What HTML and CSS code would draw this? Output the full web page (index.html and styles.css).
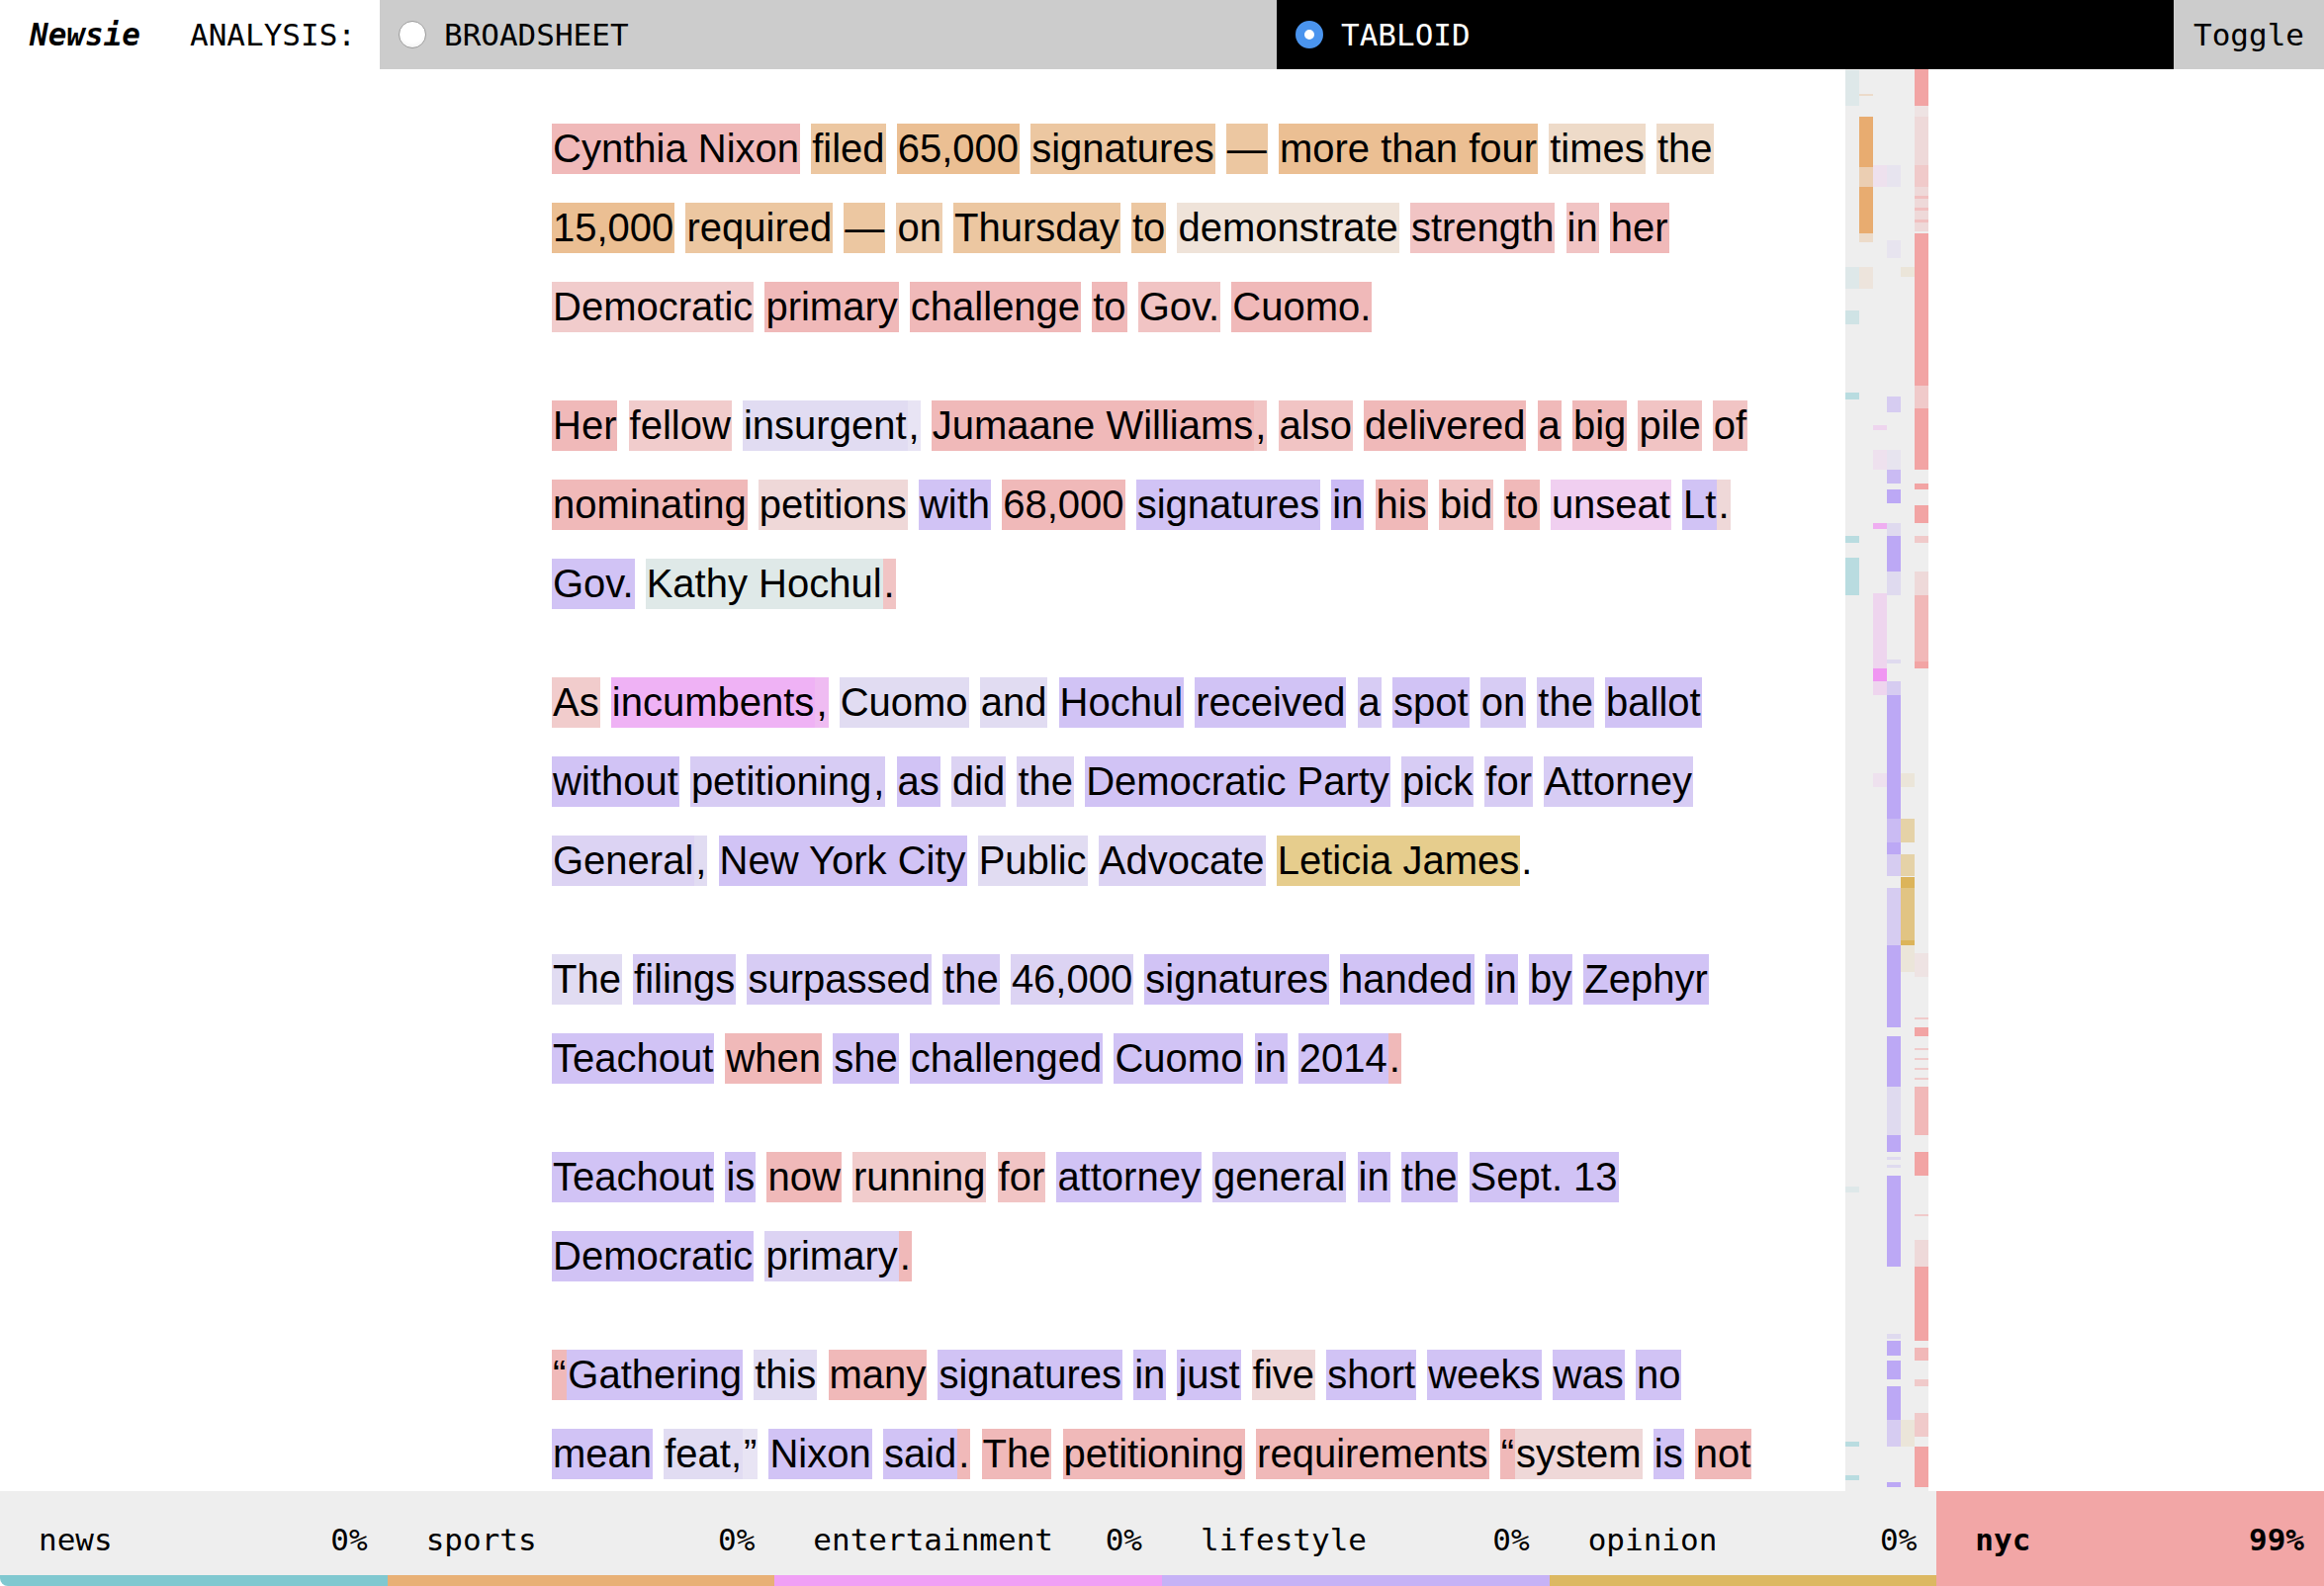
FILE: index.html
```html
<!DOCTYPE html>
<html lang="en">
<head>
<meta charset="utf-8">
<title>Newsie</title>
<link rel="stylesheet" href="styles.css">
</head>
<body>
<header class="topbar">
  <div class="brand">Newsie</div>
  <div class="label">ANALYSIS:</div>
  <div class="mode"><span class="radio"></span><span>BROADSHEET</span></div>
  <div class="mode mode-on"><span class="radio radio-on"></span><span>TABLOID</span></div>
  <button class="toggle">Toggle</button>
</header>

<div class="main">
  <article class="story">
    <p><span class="w r1">Cynthia Nixon</span> <span class="w o2">filed</span> <span class="w o1">65,000</span> <span class="w o2">signatures</span> <span class="w o2">—</span> <span class="w o1">more than four</span> <span class="w o4">times</span> <span class="w o4">the</span><br><span class="w o1">15,000</span> <span class="w o2">required</span> <span class="w o2">—</span> <span class="w o3">on</span> <span class="w o2">Thursday</span> <span class="w o2">to</span> <span class="w o5">demonstrate</span> <span class="w r2">strength</span> <span class="w r2">in</span> <span class="w r1">her</span><br><span class="w r3">Democratic</span> <span class="w r1">primary</span> <span class="w r1">challenge</span> <span class="w r1">to</span> <span class="w r2">Gov.</span> <span class="w r1">Cuomo.</span></p>

    <p><span class="w r1">Her</span> <span class="w r3">fellow</span> <span class="w p4">insurgent</span><span class="w p5">,</span> <span class="w r1">Jumaane Williams</span><span class="w r2">,</span> <span class="w r2">also</span> <span class="w r1">delivered</span> <span class="w r1">a</span> <span class="w r1">big</span> <span class="w r2">pile</span> <span class="w r2">of</span><br><span class="w r1">nominating</span> <span class="w r4">petitions</span> <span class="w p1">with</span> <span class="w r1">68,000</span> <span class="w p1">signatures</span> <span class="w p0">in</span> <span class="w r1">his</span> <span class="w r2">bid</span> <span class="w r1">to</span> <span class="w k2">unseat</span> <span class="w p1">Lt</span><span class="w r4">.</span><br><span class="w p1">Gov.</span> <span class="w t1">Kathy Hochul</span><span class="w r2">.</span></p>

    <p><span class="w r3">As</span> <span class="w k1">incumbents</span><span class="w k3">,</span> <span class="w p4">Cuomo</span> <span class="w p4">and</span> <span class="w p1">Hochul</span> <span class="w p1">received</span> <span class="w p2">a</span> <span class="w p1">spot</span> <span class="w p2">on</span> <span class="w p2">the</span> <span class="w p1">ballot</span><br><span class="w p1">without</span> <span class="w p2">petitioning</span><span class="w p2">,</span> <span class="w p1">as</span> <span class="w p3">did</span> <span class="w p3">the</span> <span class="w p1">Democratic Party</span> <span class="w p2">pick</span> <span class="w p2">for</span> <span class="w p2">Attorney</span><br><span class="w p3">General</span><span class="w p4">,</span> <span class="w p1">New York City</span> <span class="w p4">Public</span> <span class="w p3">Advocate</span> <span class="w g1">Leticia James</span><span class="w">.</span></p>

    <p><span class="w p4">The</span> <span class="w p2">filings</span> <span class="w p2">surpassed</span> <span class="w p2">the</span> <span class="w p3">46,000</span> <span class="w p1">signatures</span> <span class="w p1">handed</span> <span class="w p1">in</span> <span class="w p1">by</span> <span class="w p1">Zephyr</span><br><span class="w p1">Teachout</span> <span class="w r1">when</span> <span class="w p1">she</span> <span class="w p1">challenged</span> <span class="w p1">Cuomo</span> <span class="w p1">in</span> <span class="w p1">2014</span><span class="w r1">.</span></p>

    <p><span class="w p1">Teachout</span> <span class="w p1">is</span> <span class="w r1">now</span> <span class="w r3">running</span> <span class="w r2">for</span> <span class="w p1">attorney</span> <span class="w p2">general</span> <span class="w p1">in</span> <span class="w p1">the</span> <span class="w p1">Sept. 13</span><br><span class="w p1">Democratic</span> <span class="w p3">primary</span><span class="w r1">.</span></p>

    <p><span class="w r1">“</span><span class="w p1">Gathering</span> <span class="w p4">this</span> <span class="w r1">many</span> <span class="w p1">signatures</span> <span class="w p1">in</span> <span class="w p1">just</span> <span class="w r4">five</span> <span class="w p1">short</span> <span class="w p1">weeks</span> <span class="w p1">was</span> <span class="w p1">no</span><br><span class="w p1">mean</span> <span class="w p4">feat,</span><span class="w p5">”</span> <span class="w p1">Nixon</span> <span class="w p1">said</span><span class="w r1">.</span> <span class="w r1">The</span> <span class="w r1">petitioning</span> <span class="w r1">requirements</span> <span class="w r1">“</span><span class="w r4">system</span> <span class="w p1">is</span> <span class="w r1">not</span></p>
  </article>

  <aside class="minimap">
    <div class="mm-col mm-news">
      <i class="s5" style="top:1px;height:36px"></i>
      <i class="s5" style="top:200px;height:22px"></i>
      <i class="s4" style="top:244px;height:14px"></i>
      <i class="s3" style="top:327px;height:7px"></i>
      <i class="s3" style="top:472px;height:7px"></i>
      <i class="s3" style="top:494px;height:38px"></i>
      <i class="s5" style="top:1130px;height:6px"></i>
      <i class="s3" style="top:1388px;height:5px"></i>
      <i class="s3" style="top:1422px;height:5px"></i>
    </div>
    <div class="mm-col mm-sports">
      <i class="s4" style="top:25px;height:2px"></i>
      <i class="s1" style="top:48px;height:51px"></i>
      <i class="s3" style="top:99px;height:20px"></i>
      <i class="s1" style="top:119px;height:47px"></i>
      <i class="s4" style="top:166px;height:9px"></i>
      <i class="s5" style="top:200px;height:22px"></i>
    </div>
    <div class="mm-col mm-ent">
      <i class="s5" style="top:97px;height:22px"></i>
      <i class="s4" style="top:360px;height:5px"></i>
      <i class="s5" style="top:385px;height:20px"></i>
      <i class="s2" style="top:459px;height:6px"></i>
      <i class="s4" style="top:530px;height:76px"></i>
      <i class="s1" style="top:606px;height:13px"></i>
      <i class="s4" style="top:619px;height:14px"></i>
      <i class="s5" style="top:712px;height:14px"></i>
    </div>
    <div class="mm-col mm-life">
      <i class="s5" style="top:97px;height:22px"></i>
      <i class="s5" style="top:173px;height:18px"></i>
      <i class="s3" style="top:331px;height:16px"></i>
      <i class="s5" style="top:385px;height:20px"></i>
      <i class="s2" style="top:405px;height:14px"></i>
      <i class="s1" style="top:425px;height:14px"></i>
      <i class="s4" style="top:459px;height:13px"></i>
      <i class="s1" style="top:472px;height:36px"></i>
      <i class="s4" style="top:508px;height:24px"></i>
      <i class="s4" style="top:597px;height:4px"></i>
      <i class="s3" style="top:619px;height:14px"></i>
      <i class="s1" style="top:633px;height:125px"></i>
      <i class="s2" style="top:758px;height:24px"></i>
      <i class="s1" style="top:782px;height:12px"></i>
      <i class="s3" style="top:794px;height:22px"></i>
      <i class="s3" style="top:828px;height:58px"></i>
      <i class="s1" style="top:886px;height:83px"></i>
      <i class="s1" style="top:978px;height:51px"></i>
      <i class="s4" style="top:1029px;height:49px"></i>
      <i class="s1" style="top:1078px;height:17px"></i>
      <i class="s4" style="top:1100px;height:3px"></i>
      <i class="s4" style="top:1108px;height:3px"></i>
      <i class="s1" style="top:1119px;height:92px"></i>
      <i class="s4" style="top:1279px;height:5px"></i>
      <i class="s1" style="top:1286px;height:15px"></i>
      <i class="s1" style="top:1306px;height:19px"></i>
      <i class="s1" style="top:1332px;height:34px"></i>
      <i class="s3" style="top:1366px;height:27px"></i>
      <i class="s1" style="top:1429px;height:5px"></i>
    </div>
    <div class="mm-col mm-op">
      <i class="s5" style="top:200px;height:10px"></i>
      <i class="s5" style="top:712px;height:14px"></i>
      <i class="s3" style="top:758px;height:24px"></i>
      <i class="s3" style="top:794px;height:22px"></i>
      <i class="s1" style="top:817px;height:11px"></i>
      <i class="s2" style="top:828px;height:53px"></i>
      <i class="s1" style="top:881px;height:5px"></i>
      <i class="s5" style="top:886px;height:27px"></i>
      <i class="s5" style="top:1366px;height:27px"></i>
    </div>
    <div class="mm-col mm-nyc">
      <i class="s1" style="top:0px;height:37px"></i>
      <i class="s5" style="top:37px;height:11px"></i>
      <i class="s4" style="top:48px;height:49px"></i>
      <i class="s3" style="top:97px;height:22px"></i>
      <i class="s4" style="top:119px;height:45px"></i>
      <i class="s3" style="top:128px;height:3px"></i>
      <i class="s3" style="top:140px;height:3px"></i>
      <i class="s3" style="top:152px;height:3px"></i>
      <i class="s1" style="top:166px;height:154px"></i>
      <i class="s3" style="top:320px;height:23px"></i>
      <i class="s1" style="top:343px;height:62px"></i>
      <i class="s1" style="top:419px;height:6px"></i>
      <i class="s1" style="top:441px;height:18px"></i>
      <i class="s3" style="top:472px;height:7px"></i>
      <i class="s4" style="top:508px;height:24px"></i>
      <i class="s2" style="top:532px;height:67px"></i>
      <i class="s1" style="top:599px;height:7px"></i>
      <i class="s5" style="top:894px;height:24px"></i>
      <i class="s3" style="top:959px;height:2px"></i>
      <i class="s1" style="top:969px;height:9px"></i>
      <i class="s3" style="top:990px;height:2px"></i>
      <i class="s3" style="top:1000px;height:2px"></i>
      <i class="s3" style="top:1010px;height:2px"></i>
      <i class="s3" style="top:1020px;height:2px"></i>
      <i class="s2" style="top:1029px;height:49px"></i>
      <i class="s1" style="top:1095px;height:24px"></i>
      <i class="s3" style="top:1158px;height:2px"></i>
      <i class="s4" style="top:1184px;height:27px"></i>
      <i class="s1" style="top:1211px;height:75px"></i>
      <i class="s2" style="top:1293px;height:13px"></i>
      <i class="s3" style="top:1325px;height:7px"></i>
      <i class="s3" style="top:1359px;height:24px"></i>
      <i class="s1" style="top:1393px;height:41px"></i>
    </div>
  </aside>
</div>

<footer class="cats">
  <div class="cat cat-news"><span>news</span><span>0%</span></div>
  <div class="cat cat-sports"><span>sports</span><span>0%</span></div>
  <div class="cat cat-ent"><span>entertainment</span><span>0%</span></div>
  <div class="cat cat-life"><span>lifestyle</span><span>0%</span></div>
  <div class="cat cat-op"><span>opinion</span><span>0%</span></div>
  <div class="cat cat-nyc"><span>nyc</span><span>99%</span></div>
</footer>
</body>
</html>
```

FILE: styles.css
```css
html, body {
  margin: 0;
  padding: 0;
}

body {
  overflow: hidden;
  background: #fff;
  color: #000;
  font-family: "Liberation Sans", Arial, sans-serif;
}

/* ---------- top bar ---------- */
.topbar {
  display: flex;
  height: 70px;
  font-family: "DejaVu Sans Mono", "Liberation Mono", monospace;
  font-size: 31px;
}

.brand {
  display: flex;
  align-items: center;
  padding-left: 30px;
  margin-right: 50px;
  font-weight: bold;
  font-style: italic;
}

.label {
  display: flex;
  align-items: center;
  margin-right: 24px;
}

.mode {
  flex: 1;
  display: flex;
  align-items: center;
  gap: 18px;
  padding-left: 19px;
  background: #cccccc;
  color: #000;
}

.mode-on {
  background: #000;
  color: #fff;
}

.radio {
  box-sizing: border-box;
  width: 28px;
  height: 28px;
  border-radius: 50%;
  border: 1px solid #9c9c9c;
  background: radial-gradient(circle at 50% 35%, #ffffff 55%, #ececec 100%);
}

.radio-on {
  border: 9px solid #4a94ee;
  background: #fff;
}

.toggle {
  display: flex;
  align-items: center;
  padding: 0 20px;
  border: 0;
  margin: 0;
  background: #cccccc;
  color: #000;
  font: inherit;
}

/* ---------- main ---------- */
.main {
  display: flex;
  height: calc(100vh - 166px);
}

.story {
  flex: none;
  box-sizing: border-box;
  width: 1866px;
  padding-left: 558px;
}

.story p {
  margin: 40px 0;
  font-size: 40px;
  line-height: 80px;
  white-space: nowrap;
}

.w {
  display: inline-block;
  height: 51px;
  line-height: 51px;
  padding: 0 1px;
}

/* nyc (red) */
.r1 { background: #f0b9b9; }
.r2 { background: #f1c4c4; }
.r3 { background: #f1cccc; }
.r4 { background: #efd8d8; }
/* sports (orange) */
.o1 { background: #ebbf93; }
.o2 { background: #ecc7a1; }
.o3 { background: #eecfb1; }
.o4 { background: #eedbc9; }
.o5 { background: #efe3d9; }
/* lifestyle (purple) */
.p0 { background: #cbbbf5; }
.p1 { background: #d1c3f5; }
.p2 { background: #d7ccf4; }
.p3 { background: #dcd3f3; }
.p4 { background: #e1dcf2; }
.p5 { background: #e8e4f4; }
/* entertainment (pink) */
.k1 { background: #efb2f5; }
.k2 { background: #f0cff0; }
.k3 { background: #efbcf2; }
/* opinion (gold) */
.g1 { background: #e6cd8d; }
/* news (teal) */
.t1 { background: #dfe9e8; }

/* ---------- minimap ---------- */
.minimap {
  flex: none;
  display: flex;
  width: 84px;
  background: #eeeeee;
}

.mm-col {
  position: relative;
  width: 14px;
  filter: blur(0.6px);
}

.mm-col i {
  position: absolute;
  left: 0;
  right: 0;
}

.mm-news i { background: #80c8d0; }
.mm-sports i { background: #e8ac70; }
.mm-ent i { background: #f096f2; }
.mm-life i { background: #bca8f5; }
.mm-op i { background: #dcb45a; }
.mm-nyc i { background: #f2a4a4; }

.s1 { opacity: 1; }
.s2 { opacity: 0.72; }
.s3 { opacity: 0.48; }
.s4 { opacity: 0.28; }
.s5 { opacity: 0.14; }

/* ---------- footer ---------- */
.cats {
  position: fixed;
  left: 0;
  right: 0;
  bottom: 0;
  height: 96px;
  display: flex;
  font-family: "DejaVu Sans Mono", "Liberation Mono", monospace;
  font-size: 31px;
}

.cat {
  flex: 1;
  box-sizing: border-box;
  display: flex;
  justify-content: space-between;
  align-items: center;
  padding: 13px 20px 0 39px;
  background: #eeeeee;
  border-bottom: 11px solid #eeeeee;
}

.cat-news { border-bottom-color: #80c8d0; border-bottom-left-radius: 8px; }
.cat-sports { border-bottom-color: #e8b076; }
.cat-ent { border-bottom-color: #f0a0f5; }
.cat-life { border-bottom-color: #c6b2f6; }
.cat-op { border-bottom-color: #dcb862; }
.cat-nyc {
  background: #f2a6a6;
  border-bottom-color: #f2a6a6;
  font-weight: bold;
}
```
